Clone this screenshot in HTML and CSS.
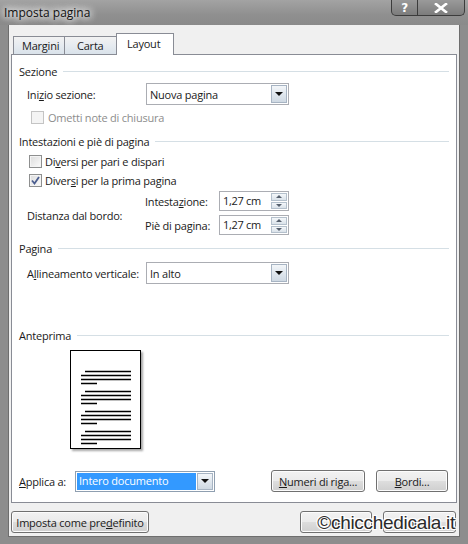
FILE: index.html
```html
<!DOCTYPE html>
<html lang="it">
<head>
<meta charset="utf-8">
<title>Imposta pagina</title>
<link rel="stylesheet" href="styles.css">
</head>
<body>
<div class="window">
  <div class="titlebar">
    <span class="title">Imposta pagina</span>
    <div class="caption-btns">
      <span class="cap-btn help">?</span>
      <span class="cap-btn close">
        <svg width="14" height="10" viewBox="0 0 14 10"><path d="M2 1 L12 9 M12 1 L2 9" stroke="#fff" stroke-width="2.6" stroke-linecap="square"/></svg>
      </span>
    </div>
  </div>
  <div class="client">
    <div class="tabs">
      <div class="tab">Margini</div>
      <div class="tab">Carta</div>
      <div class="tab active">Layout</div>
    </div>
    <div class="panel">
      <div class="group-h g1"><span>Sezione</span><i></i></div>
      <div class="row r-inizio indent">
        <span class="lbl w119">Ini<u>z</u>io sezione:</span>
        <div class="combo w143"><span class="val">Nuova pagina</span><span class="drop"><b></b></span></div>
      </div>
      <div class="check disabled r-ometti"><span class="box"></span><span>Ometti note di chiusura</span></div>

      <div class="group-h g2"><span>Intestazioni e piè di pagina</span><i></i></div>
      <div class="check r-c1"><span class="box"></span><span>Di<u>v</u>ersi per pari e dispari</span></div>
      <div class="check r-c2"><span class="box checked"><svg width="9" height="9" viewBox="0 0 9 9"><path d="M1 4.5 L3.5 7.5 L8 1" fill="none" stroke="#4b5d8f" stroke-width="1.8"/></svg></span><span>Diver<u>s</u>i per la prima pagina</span></div>
      <div class="dist indent">
        <span class="lbl w118">Distanza dal bordo:</span>
        <div class="spins">
          <div class="spin-row"><span class="lbl w74">Intesta<u>z</u>ione:</span><div class="spin"><span class="val">1,27 cm</span><span class="arrows"><span class="up"><b></b></span><span class="dn"><b></b></span></span></div></div>
          <div class="spin-row"><span class="lbl w74">Piè di pagina:</span><div class="spin"><span class="val">1,27 cm</span><span class="arrows"><span class="up"><b></b></span><span class="dn"><b></b></span></span></div></div>
        </div>
      </div>

      <div class="group-h g3"><span>Pagina</span><i></i></div>
      <div class="row r-all indent">
        <span class="lbl w119">A<u>l</u>lineamento verticale:</span>
        <div class="combo w143"><span class="val">In alto</span><span class="drop"><b></b></span></div>
      </div>

      <div class="group-h g4"><span>Anteprima</span><i></i></div>
      <div class="preview">
        <svg width="69" height="97" viewBox="0 0 69 97">
          <g stroke="#000" stroke-width="1.3">
            <path d="M14 20.5H60M10 24.5H60M10 28.5H60M10 32.5H26"/>
            <path d="M14 40.5H60M10 44.5H60M10 48.5H60M10 52.5H26"/>
            <path d="M14 60.5H60M10 64.5H60M10 68.5H60M10 72.5H26"/>
            <path d="M14 80.5H60M10 84.5H60M10 88.5H60M10 92.5H26"/>
          </g>
        </svg>
      </div>

      <div class="row r-bottom">
        <span class="lbl w56"><u>A</u>pplica a:</span>
        <div class="combo w140 focus"><span class="val sel">Intero documento</span><span class="drop"><b></b></span></div>
        <button class="btn b-num"><u>N</u>umeri di riga...</button>
        <button class="btn b-bordi"><u>B</u>ordi...</button>
      </div>
    </div>
    <div class="footer">
      <button class="btn b-def">Imposta come pre<u>d</u>efinito</button>
      <button class="btn b-ok">OK</button>
      <button class="btn b-ann">Annulla</button>
    </div>
    <div class="watermark">©chicchedicala.it</div>
  </div>
</div>
</body>
</html>
```

FILE: styles.css
```css
* { box-sizing: border-box; }
html, body { margin: 0; padding: 0; }
body {
  width: 468px;
  height: 544px;
  overflow: hidden;
  font-family: "Open Sans", "Noto Sans", sans-serif;
  font-size: 11px;
  letter-spacing: -0.22px;
  color: #1a1a1a;
}
u { text-decoration: underline; text-underline-offset: 1px; }

.window {
  width: 468px;
  height: 544px;
  background: #8d8d8d;
  display: flex;
  flex-direction: column;
  padding: 0 8px 7px 8px;
}
.titlebar {
  height: 25px;
  margin: 0 -8px;
  padding: 0 3px 0 4px;
  display: flex;
  align-items: flex-start;
  justify-content: space-between;
  background: linear-gradient(#a3a3a3, #8f8f8f 60%, #8a8a8a);
}
.title {
  margin-top: 4px;
  font-size: 12px;
  letter-spacing: 0;
  color: #111;
  text-shadow: 0 0 6px #fff, 0 0 8px #fff, 0 0 10px #eee;
}
.caption-btns {
  display: flex;
  height: 16px;
  border: 1px solid #3c3c3c;
  border-top: none;
  border-radius: 0 0 5px 5px;
  overflow: hidden;
  background: linear-gradient(#9a9a9a, #7c7c7c);
}
.cap-btn {
  display: flex;
  align-items: center;
  justify-content: center;
  color: #fff;
  font-weight: bold;
  font-family: "DejaVu Sans", sans-serif;
  font-size: 12px;
}
.cap-btn.help { width: 26px; border-right: 1px solid #3c3c3c; }
.cap-btn.close { width: 46px; }

.client {
  flex: 1;
  position: relative;
  background: #f0f0f0;
  border: 1px solid #6e6e6e;
  border-top: none;
  display: flex;
  flex-direction: column;
  padding: 8px 2px 0 2px;
}
.tabs {
  display: flex;
  height: 21px;
  align-items: flex-end;
  padding-left: 2px;
  position: relative;
  z-index: 1;
}
.tab {
  height: 18px;
  padding: 0 8px;
  border: 1px solid #898c95;
  border-bottom: none;
  background: linear-gradient(#f2f2f2, #e6ebf0 50%, #d9e2ea);
  display: flex;
  align-items: center;
  margin-right: -1px;
}
.tab:nth-child(1) { width: 52px; }
.tab:nth-child(2) { width: 53px; padding-left: 12px; }
.tab.active {
  height: 22px;
  width: 58px;
  background: #fff;
  padding: 0 0 2px 10px;
  margin-bottom: -1px;
}
.panel {
  height: 449px;
  background: #fff;
  border: 1px solid #898c95;
  padding: 0 7px;
  display: flex;
  flex-direction: column;
}
.group-h {
  height: 14px;
  display: flex;
  align-items: center;
}
.group-h i {
  flex: 1;
  height: 0;
  border-top: 1px solid #d5dfe5;
  margin-left: 6px;
}
.g1 { margin-top: 9px; }
.g2 { margin-top: 10px; }
.g3 { margin-top: 6px; }
.g4 { margin-top: 44px; }

.indent { padding-left: 8px; }
.row { display: flex; align-items: center; }
.r-inizio { margin-top: 5px; height: 22px; }
.r-all { margin-top: 7px; height: 22px; }
.lbl { flex: none; }
.w119 { width: 119px; }
.w118 { width: 118px; }
.w74 { width: 74px; }
.w56 { width: 56px; }

.combo {
  height: 22px;
  border: 1px solid #abadb3;
  background: #fff;
  display: flex;
  align-items: center;
  padding: 1px;
}
.w143 { width: 143px; }
.w140 { width: 140px; height: 21px; }
.combo .val { flex: 1; padding-left: 2px; }
.combo .val.sel {
  background: #3399ff;
  color: #fff;
  height: 17px;
  line-height: 16px;
  margin-right: 1px;
}
.drop {
  width: 16px;
  align-self: stretch;
  border: 1px solid #a7b4c3;
  background: linear-gradient(#f3f6f9, #e0e7ee 50%, #cfd9e3);
  display: flex;
  align-items: center;
  justify-content: center;
}
.drop b {
  width: 0; height: 0;
  border-left: 4px solid transparent;
  border-right: 4px solid transparent;
  border-top: 4px solid #111;
}
.combo.focus { border-color: #8f9fb0; }

.check {
  display: flex;
  align-items: center;
  height: 14px;
  padding-left: 10px;
}
.check .box {
  width: 13px;
  height: 13px;
  border: 1px solid #8e8f8f;
  background: linear-gradient(135deg, #dcdcdc, #fbfbfb);
  box-shadow: inset 0 0 0 1px #f4f4f4;
  margin-right: 3px;
  display: flex;
  align-items: center;
  justify-content: center;
}
.check.disabled { color: #8d8d8d; padding-left: 12px; }
.check.disabled .box { border-color: #c4c4c4; background: #f4f4f4; margin-right: 4px; }
.r-ometti { margin-top: 5px; }
.r-c1 { margin-top: 6px; }
.r-c2 { margin-top: 5px; }

.dist {
  margin-top: 4px;
  display: flex;
  align-items: center;
}
.dist > .lbl { padding-top: 4px; }
.spins { display: flex; flex-direction: column; gap: 4px; }
.spin-row { display: flex; align-items: center; }
.spin {
  width: 70px;
  height: 20px;
  border: 1px solid #abadb3;
  background: #fff;
  display: flex;
  align-items: stretch;
  padding: 1px;
}
.spin .val { flex: 1; padding-left: 2px; line-height: 16px; letter-spacing: -0.3px; }
.arrows { width: 16px; display: flex; flex-direction: column; gap: 1px; }
.arrows span {
  flex: 1;
  border: 1px solid #b4c0cc;
  background: linear-gradient(#f4f7fa, #dae2ea);
  display: flex;
  align-items: center;
  justify-content: center;
}
.arrows .up b {
  border-left: 3px solid transparent;
  border-right: 3px solid transparent;
  border-bottom: 3px solid #56606e;
}
.arrows .dn b {
  border-left: 3px solid transparent;
  border-right: 3px solid transparent;
  border-top: 3px solid #56606e;
}

.preview {
  margin: 8px 0 0 51px;
  width: 71px;
  height: 99px;
  border: 1px solid #000;
  background: #fff;
  box-shadow: 2px 2px 2px rgba(0,0,0,0.35);
}
.preview svg { display: block; }

.r-bottom { margin-top: 21px; height: 22px; }
.btn {
  font: inherit;
  letter-spacing: inherit;
  color: #1a1a1a;
  height: 22px;
  border: 1px solid #707070;
  border-radius: 3px;
  background: linear-gradient(#f2f2f2, #ebebeb 48%, #dddddd 52%, #cfcfcf);
  box-shadow: inset 0 0 0 1px #fcfcfc;
  padding: 0;
  display: flex;
  align-items: center;
  justify-content: center;
}
.b-num { width: 94px; margin-left: auto; }
.b-bordi { width: 72px; margin-left: 11px; margin-right: 1px; }

.footer {
  margin-top: 8px;
  display: flex;
  align-items: center;
  height: 22px;
  padding-right: 1px;
}
.b-def { width: 138px; margin-left: 0; }
.b-ok { width: 72px; margin-left: auto; }
.b-ann { width: 73px; margin-left: 11px; }

.watermark {
  position: absolute;
  right: 4px;
  bottom: 2px;
  font-family: "Liberation Sans", Arial, sans-serif;
  font-size: 19px;
  color: #2a2a2a;
  letter-spacing: -0.3px;
  text-shadow: -1px -1px 0 #fff, 1px -1px 0 #fff, -1px 1px 0 #fff, 1px 1px 0 #fff, 0 0 3px #fff;
}
```
